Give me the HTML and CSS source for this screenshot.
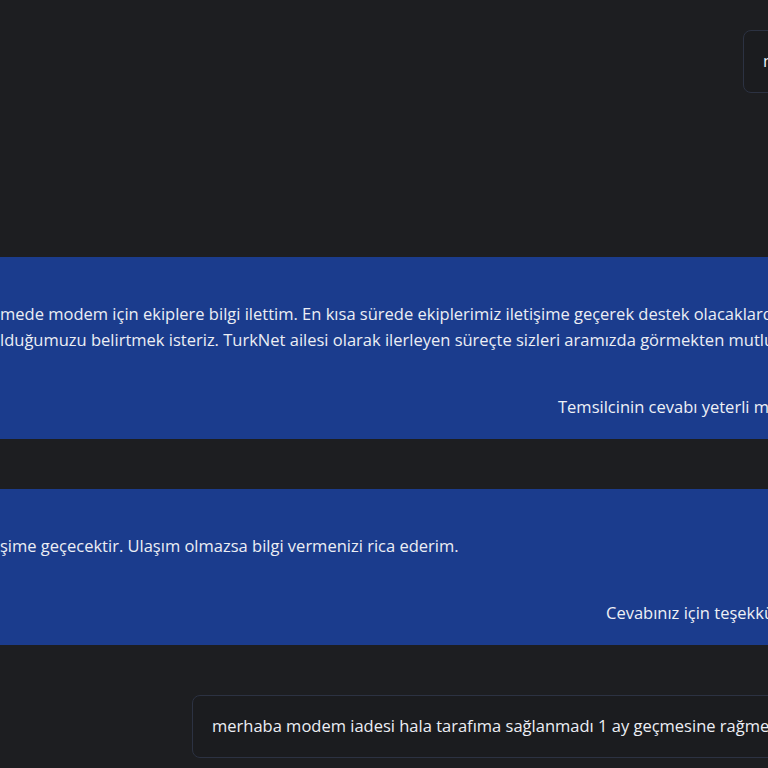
FILE: index.html
```html
<!DOCTYPE html>
<html lang="tr">
<head>
    <meta charset="UTF-8">
    <meta name="viewport" content="width=device-width, initial-scale=1.0">
    <title>TurkNet Destek - Mesajlar</title>
    <link rel="stylesheet" href="styles.css">
</head>
<body>

    <div class="chat">
        <!-- customer message -->
        <div class="bubble bubble-first">
            <p>merhaba modem iadesi için kargo bekliyorum</p>
        </div>

        <!-- agent replies -->
        <div class="reply reply-first">
            <p class="reply-text">
                <span class="line">mede modem için ekiplere bilgi ilettim. En kısa sürede ekiplerimiz iletişime geçerek destek olacaklardır.</span>
                <span class="line">lduğumuzu belirtmek isteriz. TurkNet ailesi olarak ilerleyen süreçte sizleri aramızda görmekten mutluluk duyarız.</span>
            </p>
            <div class="feedback feedback-wide">Temsilcinin cevabı yeterli miydi?</div>
        </div>

        <div class="reply">
            <p class="reply-text">
                <span class="line">şime geçecektir. Ulaşım olmazsa bilgi vermenizi rica ederim.</span>
            </p>
            <div class="feedback feedback-narrow">Cevabınız için teşekkürler.</div>
        </div>

        <!-- customer message -->
        <div class="bubble bubble-last">
            <p>merhaba modem iadesi hala tarafıma sağlanmadı 1 ay geçmesine rağmen kimse ulaşmadı</p>
        </div>
    </div>

</body>
</html>
```

FILE: styles.css
```css
html, body {
    overflow: hidden;
}

body {
    margin: 0;
    background-color: #1d1e21;
    font-family: 'Open Sans', 'Noto Sans', sans-serif;
    font-size: 16.5px;
    line-height: 26px;
    color: #eceef4;
}

p {
    margin: 0;
}

.chat {
    display: flex;
    flex-direction: column;
    padding-top: 30px;
}

.bubble {
    width: max-content;
    padding: 17px 19px 18px;
    border: 1px solid #2c3242;
    border-radius: 8px;
    background-color: #1b1c1f;
    white-space: nowrap;
}

.bubble-first {
    margin-left: 743px;
}

.bubble-last {
    margin-left: 192px;
    margin-top: 50px;
}

.reply {
    background-color: #1b3c8d;
    padding: 44px 0 19px;
    margin-top: 50px;
    white-space: nowrap;
}

.reply-first {
    margin-top: 164px;
}

.reply-text .line {
    display: block;
}

.feedback {
    margin-top: 41px;
    color: #eef0f6;
}

.feedback-wide {
    padding-left: 558px;
}

.feedback-narrow {
    padding-left: 606px;
}
```
